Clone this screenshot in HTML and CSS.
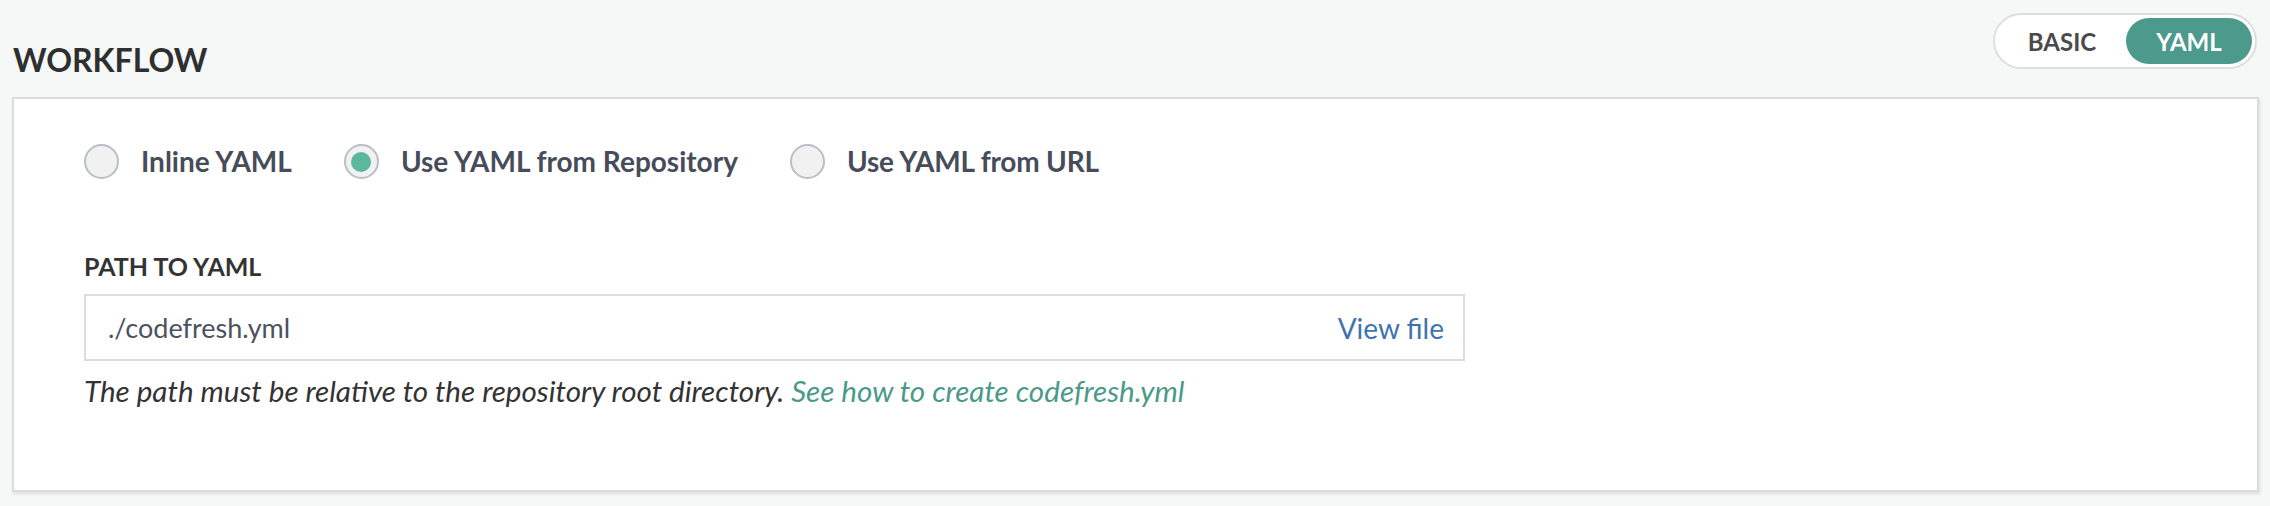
FILE: index.html
```html
<!DOCTYPE html>
<html lang="en">
<head>
<meta charset="utf-8">
<title>Workflow</title>
<link rel="stylesheet" href="styles.css">
</head>
<body>
<div class="page">
  <div class="header">
    <h2 class="title">WORKFLOW</h2>
    <div class="toggle">
      <span class="toggle-btn">BASIC</span>
      <span class="toggle-btn active">YAML</span>
    </div>
  </div>
  <div class="card">
    <div class="radios">
      <label class="radio-item"><span class="radio"></span><span class="radio-label">Inline YAML</span></label>
      <label class="radio-item"><span class="radio checked"><span class="dot"></span></span><span class="radio-label">Use YAML from Repository</span></label>
      <label class="radio-item"><span class="radio"></span><span class="radio-label">Use YAML from URL</span></label>
    </div>
    <div class="field-label">PATH TO YAML</div>
    <div class="input">
      <span class="input-text">./codefresh.yml</span>
      <span class="view-file">View file</span>
    </div>
    <p class="help">The path must be relative to the repository root directory. <span class="help-link">See how to create codefresh.yml</span></p>
  </div>
</div>
</body>
</html>
```
FILE: styles.css
```css
html, body {
  margin: 0;
  padding: 0;
}
body {
  background: #f5f8f7;
  font-family: "Lato", "Open Sans", sans-serif;
  width: 2270px;
  height: 506px;
  overflow: hidden;
}
.page {
  padding: 13px 11px 0 12px;
}
.header {
  display: flex;
  justify-content: space-between;
  align-items: flex-start;
}
.title {
  margin: 28px 0 0 1px;
  font-size: 32px;
  line-height: 38px;
  font-weight: 700;
  color: #2f2f2f;
  letter-spacing: 0;
}
.toggle {
  display: flex;
  align-items: center;
  padding: 3px;
  border: 2px solid #dedede;
  border-radius: 28px;
  background: #ffffff;
  margin-right: 2px;
}
.toggle-btn {
  display: flex;
  align-items: center;
  justify-content: center;
  width: 128px;
  height: 46px;
  font-size: 24px;
  font-weight: 700;
  color: #4a4a4a;
  border-radius: 23px;
}
.toggle-btn.active {
  width: 126px;
  background: #4b9a8b;
  color: #ffffff;
}
.card {
  margin-top: 18px;
  background: #ffffff;
  border: 2px solid #dcdcdc;
  box-shadow: 1px 2px 3px rgba(0, 0, 0, 0.1);
  padding: 45px 70px 83px 70px;
  height: 395px;
  box-sizing: border-box;
}
.radios {
  display: flex;
  align-items: center;
  gap: 52px;
  height: 35px;
}
.radio-item {
  display: flex;
  align-items: center;
  gap: 22px;
}
.radio {
  width: 35px;
  height: 35px;
  box-sizing: border-box;
  border: 2px solid #b9bfc6;
  border-radius: 50%;
  background: #f1f1f1;
  display: flex;
  align-items: center;
  justify-content: center;
}
.dot {
  width: 20px;
  height: 20px;
  border-radius: 50%;
  background: #5cb89c;
}
.radio-label {
  font-size: 28px;
  font-weight: 700;
  color: #464c59;
  line-height: 35px;
}
.radio-item:last-child .radio-label {
  letter-spacing: -0.2px;
}
.field-label {
  margin-top: 72px;
  font-size: 25px;
  line-height: 30px;
  font-weight: 700;
  color: #333333;
}
.input {
  margin-top: 13px;
  width: 1381px;
  height: 67px;
  box-sizing: border-box;
  border: 2px solid #dcdcdc;
  display: flex;
  align-items: center;
  justify-content: space-between;
  padding: 0 19px 0 22px;
}
.input-text {
  font-size: 27px;
  color: #4b5261;
}
.view-file {
  font-size: 28px;
  color: #3f73b0;
}
.help {
  margin: 12px 0 0 0;
  font-size: 29.6px;
  line-height: 35px;
  font-style: italic;
  color: #333333;
}
.help-link {
  color: #4a9a8a;
}
```
